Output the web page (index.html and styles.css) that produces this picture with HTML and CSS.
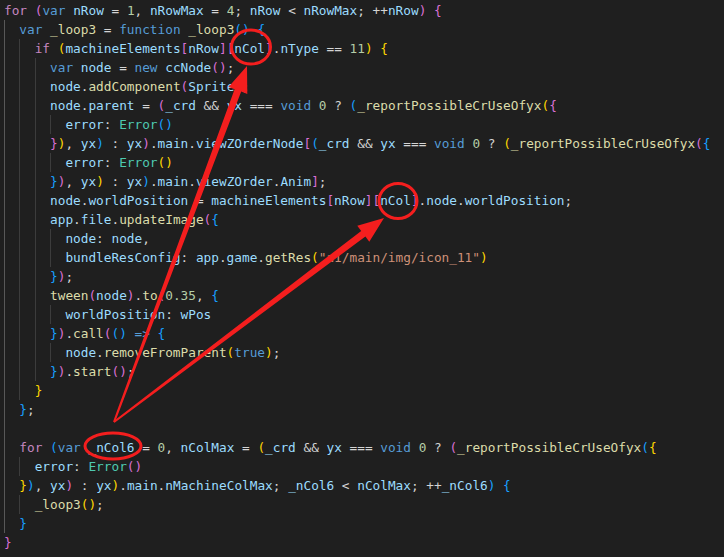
FILE: index.html
```html
<!DOCTYPE html>
<html lang="en">
<head>
    <meta charset="UTF-8">
    <meta name="viewport" content="width=device-width, initial-scale=1.0">
    <title>loop3.js</title>
    <link rel="stylesheet" href="styles.css">
</head>
<body>
    <div class="editor">
        <!-- Code -->
        <div class="code">
            <div class="ln"><span class="k">for</span> <span class="b2">(</span><span class="s">var</span> <span class="v">nRow</span> = <span class="n">1</span>, <span class="v">nRowMax</span> = <span class="n">4</span>; <span class="v">nRow</span> &lt; <span class="v">nRowMax</span>; ++<span class="v">nRow</span><span class="b2">)</span> <span class="b2">{</span></div>
            <div class="ln"><i class="g a"></i><span class="s">var</span> <span class="f">_loop3</span> = <span class="s">function</span> <span class="f">_loop3</span><span class="b3">()</span> <span class="b3">{</span></div>
            <div class="ln"><i class="g a"></i><i class="g"></i><span class="k">if</span> <span class="b1">(</span><span class="v">machineElements</span><span class="b2">[</span><span class="v">nRow</span><span class="b2">][</span><span class="v">nCol</span><span class="b2">]</span>.<span class="v">nType</span> == <span class="n">11</span><span class="b1">)</span> <span class="b1">{</span></div>
            <div class="ln"><i class="g a"></i><i class="g"></i><i class="g"></i><span class="s">var</span> <span class="v">node</span> = <span class="s">new</span> <span class="v">ccNode</span><span class="b2">()</span>;</div>
            <div class="ln"><i class="g a"></i><i class="g"></i><i class="g"></i><span class="v">node</span>.<span class="f">addComponent</span><span class="b2">(</span><span class="v">Sprite</span><span class="b2">)</span>;</div>
            <div class="ln"><i class="g a"></i><i class="g"></i><i class="g"></i><span class="v">node</span>.<span class="v">parent</span> = <span class="b2">(</span><span class="v">_crd</span> &amp;&amp; <span class="v">yx</span> === <span class="s">void</span> <span class="n">0</span> ? <span class="b3">(</span><span class="f">_reportPossibleCrUseOfyx</span><span class="b1">(</span><span class="b2">{</span></div>
            <div class="ln"><i class="g a"></i><i class="g"></i><i class="g"></i><i class="g"></i><span class="v">error</span>: <span class="t">Error</span><span class="b3">()</span></div>
            <div class="ln"><i class="g a"></i><i class="g"></i><i class="g"></i><span class="b2">}</span><span class="b1">)</span>, <span class="v">yx</span><span class="b3">)</span> : <span class="v">yx</span><span class="b2">)</span>.<span class="v">main</span>.<span class="v">viewZOrderNode</span><span class="b2">[</span><span class="b3">(</span><span class="v">_crd</span> &amp;&amp; <span class="v">yx</span> === <span class="s">void</span> <span class="n">0</span> ? <span class="b1">(</span><span class="f">_reportPossibleCrUseOfyx</span><span class="b2">(</span><span class="b3">{</span></div>
            <div class="ln"><i class="g a"></i><i class="g"></i><i class="g"></i><i class="g"></i><span class="v">error</span>: <span class="t">Error</span><span class="b1">()</span></div>
            <div class="ln"><i class="g a"></i><i class="g"></i><i class="g"></i><span class="b3">}</span><span class="b2">)</span>, <span class="v">yx</span><span class="b1">)</span> : <span class="v">yx</span><span class="b3">)</span>.<span class="v">main</span>.<span class="v">viewZOrder</span>.<span class="v">Anim</span><span class="b2">]</span>;</div>
            <div class="ln"><i class="g a"></i><i class="g"></i><i class="g"></i><span class="v">node</span>.<span class="v">worldPosition</span> = <span class="v">machineElements</span><span class="b2">[</span><span class="v">nRow</span><span class="b2">][</span><span class="v">nCol</span><span class="b2">]</span>.<span class="v">node</span>.<span class="v">worldPosition</span>;</div>
            <div class="ln"><i class="g a"></i><i class="g"></i><i class="g"></i><span class="v">app</span>.<span class="v">file</span>.<span class="f">updateImage</span><span class="b2">(</span><span class="b3">{</span></div>
            <div class="ln"><i class="g a"></i><i class="g"></i><i class="g"></i><i class="g"></i><span class="v">node</span>: <span class="v">node</span>,</div>
            <div class="ln"><i class="g a"></i><i class="g"></i><i class="g"></i><i class="g"></i><span class="v">bundleResConfig</span>: <span class="v">app</span>.<span class="v">game</span>.<span class="f">getRes</span><span class="b1">(</span><span class="str">"a1/main/img/icon_11"</span><span class="b1">)</span></div>
            <div class="ln"><i class="g a"></i><i class="g"></i><i class="g"></i><span class="b3">}</span><span class="b2">)</span>;</div>
            <div class="ln"><i class="g a"></i><i class="g"></i><i class="g"></i><span class="f">tween</span><span class="b2">(</span><span class="v">node</span><span class="b2">)</span>.<span class="f">to</span><span class="b2">(</span><span class="n">0.35</span>, <span class="b3">{</span></div>
            <div class="ln"><i class="g a"></i><i class="g"></i><i class="g"></i><i class="g"></i><span class="v">worldPosition</span>: <span class="v">wPos</span></div>
            <div class="ln"><i class="g a"></i><i class="g"></i><i class="g"></i><span class="b3">}</span><span class="b2">)</span>.<span class="f">call</span><span class="b2">(</span><span class="b3">()</span> <span class="s">=&gt;</span> <span class="b3">{</span></div>
            <div class="ln"><i class="g a"></i><i class="g"></i><i class="g"></i><i class="g"></i><span class="v">node</span>.<span class="f">removeFromParent</span><span class="b1">(</span><span class="s">true</span><span class="b1">)</span>;</div>
            <div class="ln"><i class="g a"></i><i class="g"></i><i class="g"></i><span class="b3">}</span><span class="b2">)</span>.<span class="f">start</span><span class="b2">()</span>;</div>
            <div class="ln"><i class="g a"></i><i class="g"></i><span class="b1">}</span></div>
            <div class="ln"><i class="g a"></i><span class="b3">}</span>;</div>
            <div class="ln"><i class="g a"></i></div>
            <div class="ln"><i class="g a"></i><span class="k">for</span> <span class="b3">(</span><span class="s">var</span> <span class="v">_nCol6</span> = <span class="n">0</span>, <span class="v">nColMax</span> = <span class="b1">(</span><span class="v">_crd</span> &amp;&amp; <span class="v">yx</span> === <span class="s">void</span> <span class="n">0</span> ? <span class="b2">(</span><span class="f">_reportPossibleCrUseOfyx</span><span class="b3">(</span><span class="b1">{</span></div>
            <div class="ln"><i class="g a"></i><i class="g"></i><span class="v">error</span>: <span class="t">Error</span><span class="b2">()</span></div>
            <div class="ln"><i class="g a"></i><span class="b1">}</span><span class="b3">)</span>, <span class="v">yx</span><span class="b2">)</span> : <span class="v">yx</span><span class="b1">)</span>.<span class="v">main</span>.<span class="v">nMachineColMax</span>; <span class="v">_nCol6</span> &lt; <span class="v">nColMax</span>; ++<span class="v">_nCol6</span><span class="b3">)</span> <span class="b3">{</span></div>
            <div class="ln"><i class="g a"></i><i class="g"></i><span class="f">_loop3</span><span class="b1">()</span>;</div>
            <div class="ln"><i class="g a"></i><span class="b3">}</span></div>
            <div class="ln"><span class="b2">}</span></div>
        </div>

        <!-- Red markup drawn over the code -->
        <svg class="markup" width="724" height="557" viewBox="0 0 724 557" xmlns="http://www.w3.org/2000/svg">
            <g fill="none" stroke="#f41e1e" stroke-width="3">
                <ellipse cx="251" cy="47" rx="19.5" ry="17"></ellipse>
                <ellipse cx="398" cy="201" rx="19" ry="17.5"></ellipse>
                <ellipse cx="113" cy="446" rx="28" ry="13"></ellipse>
            </g>
            <g fill="#f41e1e">
                <polygon points="114.9,422.4 241.2,91.6 247.3,93.9 247,66 228.5,86.9 234.6,89.2 113.1,421.6"></polygon>
                <polygon points="114.6,422.8 365.4,236.5 369.3,241.7 384,218 357.3,225.7 361.2,230.9 113.4,421.2"></polygon>
            </g>
        </svg>
    </div>
</body>
</html>
```

FILE: styles.css
```css
/* Reset and base styles */
* {
    margin: 0;
    padding: 0;
    box-sizing: border-box;
}

body {
    background-color: #1f1f1f;
    color: #d4d4d4;
    width: 724px;
    height: 557px;
    overflow: hidden;
}

.editor {
    position: relative;
    width: 724px;
    height: 557px;
}

/* Code block */
.code {
    padding: 1px 0 0 4px;
    font-family: "DejaVu Sans Mono", "Liberation Mono", monospace;
    font-size: 12.75px;
    line-height: 19px;
}

.ln {
    height: 19px;
    white-space: pre;
}

/* Indent guides, one per indent level */
.g {
    display: inline-block;
    width: 2ch;
    height: 19px;
    vertical-align: top;
    border-left: 1px solid #3c3c3c;
}

.g.a {
    border-left-color: #585858;
}

/* Token colours */
.k { color: #c586c0; }
.s { color: #569cd6; }
.v { color: #9cdcfe; }
.f { color: #dcdcaa; }
.n { color: #b5cea8; }
.t { color: #4ec9b0; }
.str { color: #ce9178; }

/* Bracket pair colours */
.b1 { color: #ffd700; }
.b2 { color: #da70d6; }
.b3 { color: #179fff; }

/* Annotation layer */
.markup {
    position: absolute;
    top: 0;
    left: 0;
    pointer-events: none;
}
```
